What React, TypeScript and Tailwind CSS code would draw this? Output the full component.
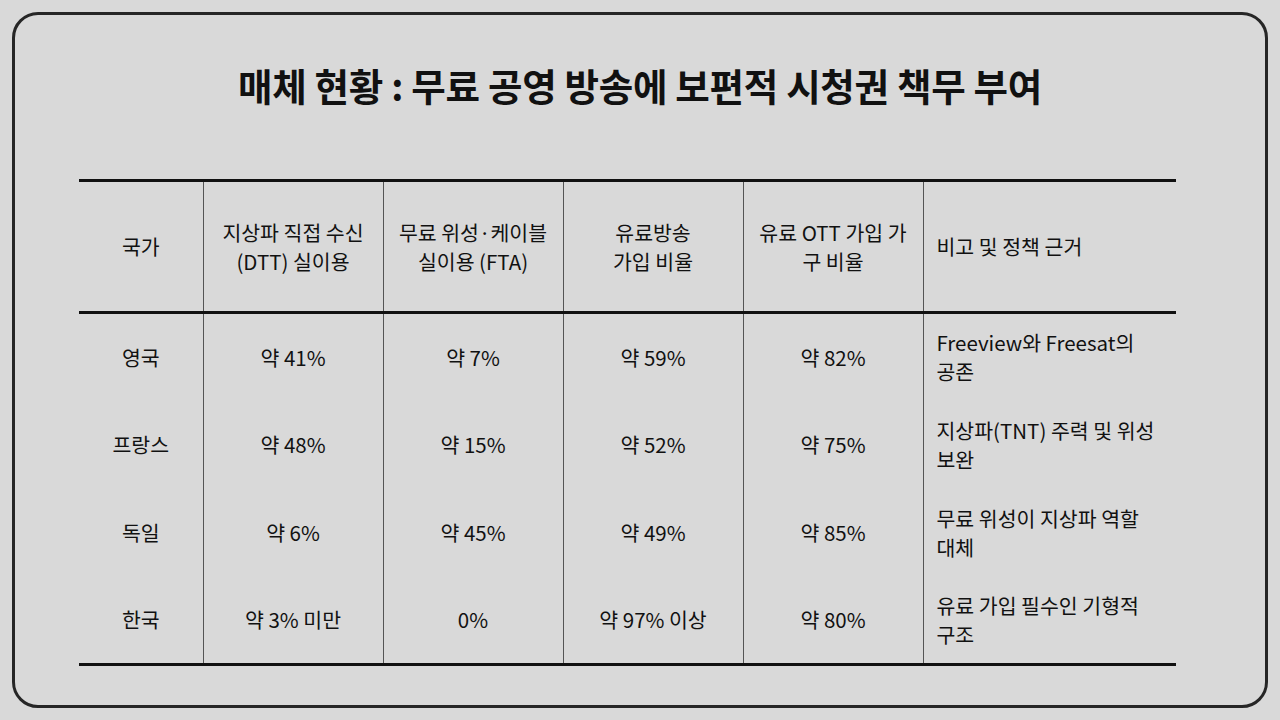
const rows = [
  { country: "영국", dtt: "약 41%", fta: "약 7%", pay: "약 59%", ott: "약 82%", note: "Freeview와 Freesat의 공존" },
  { country: "프랑스", dtt: "약 48%", fta: "약 15%", pay: "약 52%", ott: "약 75%", note: "지상파(TNT) 주력 및 위성 보완" },
  { country: "독일", dtt: "약 6%", fta: "약 45%", pay: "약 49%", ott: "약 85%", note: "무료 위성이 지상파 역할 대체" },
  { country: "한국", dtt: "약 3% 미만", fta: "0%", pay: "약 97% 이상", ott: "약 80%", note: "유료 가입 필수인 기형적 구조" },
]

const headers = [
  ["국가"],
  ["지상파 직접 수신", "(DTT) 실이용"],
  ["무료 위성·케이블", "실이용 (FTA)"],
  ["유료방송", "가입 비율"],
  ["유료 OTT 가입 가", "구 비율"],
]

export default function App() {
  return (
    <div
      className="w-[1280px] h-[720px] bg-[#d9d9d9] p-[12px] text-[#111]"
      style={{ fontFamily: '"Noto Sans CJK KR", "Noto Sans", sans-serif' }}
    >
      <div className="h-full rounded-[26px] border-[3px] border-[#262626] flex flex-col">
        <h1 className="mt-[40px] text-center text-[37.5px] font-semibold leading-[60px] tracking-[-0.3px]">
          매체 현황 : 무료 공영 방송에 보편적 시청권 책무 부여
        </h1>

        <table className="mt-[64px] ml-[64px] w-[1097px] table-fixed border-collapse text-[20.5px] leading-[29px] [word-break:keep-all]">
          <thead>
            <tr className="h-[132px] border-t-[3px] border-b-[3px] border-[#111]">
              {headers.map((h, i) => (
                <th
                  key={i}
                  className={`font-normal text-center border-x border-[#555] first:border-l-0 ${
                    i === 0 ? "w-[124px]" : "w-[180px]"
                  }`}
                >
                  {h.map((line) => (
                    <div key={line} className="whitespace-nowrap">
                      {line}
                    </div>
                  ))}
                </th>
              ))}
              <th className="font-normal text-left pl-[13px] border-l border-[#555]">비고 및 정책 근거</th>
            </tr>
          </thead>
          <tbody className="border-b-[3px] border-[#111]">
            {rows.map((r) => (
              <tr key={r.country} className="h-[88px]">
                <td className="text-center">{r.country}</td>
                <td className="text-center border-x border-[#555]">{r.dtt}</td>
                <td className="text-center border-x border-[#555]">{r.fta}</td>
                <td className="text-center border-x border-[#555]">{r.pay}</td>
                <td className="text-center border-x border-[#555]">{r.ott}</td>
                <td className="text-left pl-[13px] pr-[14px]">{r.note}</td>
              </tr>
            ))}
          </tbody>
        </table>
      </div>
    </div>
  )
}
